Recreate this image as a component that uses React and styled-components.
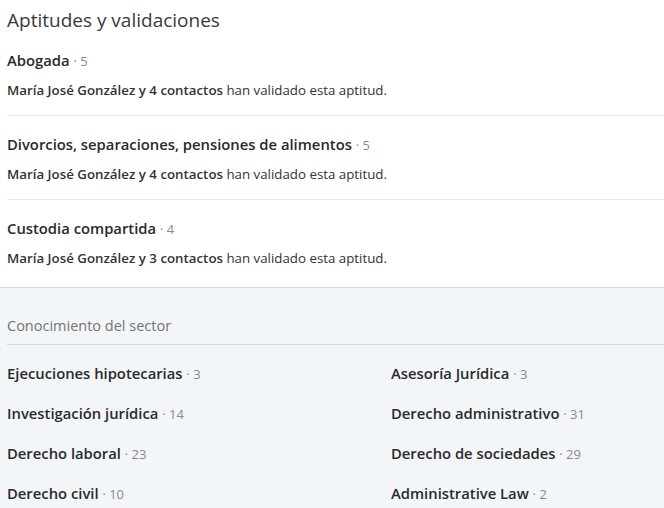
import styled, { createGlobalStyle } from "styled-components";

const GlobalStyle = createGlobalStyle`
  body {
    margin: 0;
    background: #ffffff;
    font-family: "Open Sans", "Noto Sans", sans-serif;
    color: #333;
  }
`;

const Page = styled.div`
  width: 664px;
  height: 508px;
  overflow: hidden;
`;

const Featured = styled.section`
  padding: 7px 0 0 7px;
  border-bottom: 1px solid #d9d9d9;
`;

const Title = styled.h2`
  margin: 0 0 17px;
  font-size: 19px;
  font-weight: 400;
  line-height: 26px;
  color: #3a3a3a;
`;

const SkillItem = styled.div`
  padding: 18px 0 ${(p) => (p.$last ? "20px" : "16px")};
  border-bottom: ${(p) => (p.$last ? "none" : "1px solid #e6e9ec")};
  &:first-of-type {
    padding-top: 0;
  }
`;

const SkillName = styled.span`
  display: block;
  font-size: 14.8px;
  line-height: 20px;
  font-weight: 600;
  color: #2a2a2a;
`;

const Count = styled.span`
  font-size: 13px;
  color: #8a8a8a;
  font-weight: 400;
`;

const Endorsers = styled.p`
  margin: 10px 0 0;
  font-size: 13.3px;
  line-height: 18px;
  color: #333;

  b {
    font-weight: 600;
  }
`;

const Sector = styled.section`
  background: #f3f6f8;
  padding: 28px 0 0 7px;
  height: 240px;
`;

const SectorTitle = styled.h3`
  margin: 0;
  padding-bottom: 8px;
  border-bottom: 1px solid #d4d7da;
  font-size: 14.5px;
  line-height: 20px;
  font-weight: 400;
  color: #737373;
`;

const Grid = styled.div`
  display: grid;
  grid-template-columns: 384px 1fr;
  row-gap: 18.9px;
  padding-top: 18px;
`;

const skills = [
  { name: "Abogada", count: 5, people: 4 },
  { name: "Divorcios, separaciones, pensiones de alimentos", count: 5, people: 4 },
  { name: "Custodia compartida", count: 4, people: 3 },
];

const sector = [
  ["Ejecuciones hipotecarias", 3],
  ["Asesoría Jurídica", 3],
  ["Investigación jurídica", 14],
  ["Derecho administrativo", 31],
  ["Derecho laboral", 23],
  ["Derecho de sociedades", 29],
  ["Derecho civil", 10],
  ["Administrative Law", 2],
];

const App = () => {
  return (
    <Page>
      <GlobalStyle />
      <Featured>
        <Title>Aptitudes y validaciones</Title>
        {skills.map((s, i) => (
          <SkillItem key={s.name} $last={i === skills.length - 1}>
            <SkillName>
              {s.name} <Count>· {s.count}</Count>
            </SkillName>
            <Endorsers>
              <b>María José González y {s.people} contactos</b> han validado esta aptitud.
            </Endorsers>
          </SkillItem>
        ))}
      </Featured>
      <Sector>
        <SectorTitle>Conocimiento del sector</SectorTitle>
        <Grid>
          {sector.map(([name, count]) => (
            <SkillName key={name}>
              {name} <Count>· {count}</Count>
            </SkillName>
          ))}
        </Grid>
      </Sector>
    </Page>
  );
};

export default App;
